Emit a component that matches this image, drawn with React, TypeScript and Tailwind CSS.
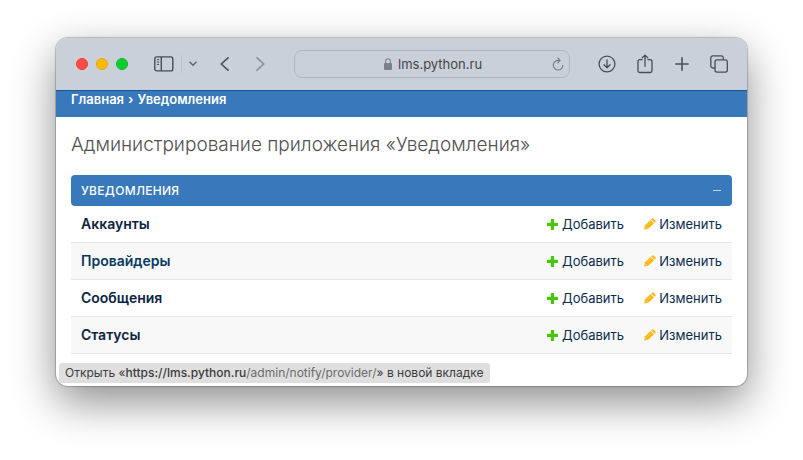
import React from "react";

const models = [
  { name: "Аккаунты", slug: "account" },
  { name: "Провайдеры", slug: "provider", hovered: true },
  { name: "Сообщения", slug: "message" },
  { name: "Статусы", slug: "status" },
];

function SidebarIcon() {
  return (
    <svg width="20" height="16" viewBox="0 0 20 16" fill="none" stroke="currentColor" strokeWidth="1.4" aria-hidden="true">
      <rect x="0.8" y="0.9" width="18" height="14" rx="2" />
      <path d="M7.3 1v14" />
      <path d="M2.9 3.6h2.3M2.9 6h2.3M2.9 8.4h2.3" strokeWidth="1" />
    </svg>
  );
}

function Chevron({ d, w, h, stroke }: { d: string; w: number; h: number; stroke: number }) {
  return (
    <svg width={w} height={h} viewBox={`0 0 ${w} ${h}`} fill="none" stroke="currentColor" strokeWidth={stroke} strokeLinecap="round" strokeLinejoin="round" aria-hidden="true">
      <path d={d} />
    </svg>
  );
}

function LockIcon() {
  return (
    <svg width="8" height="12" viewBox="0 0 8 12" aria-hidden="true" className="text-[#7c8188]">
      <rect x="0" y="5" width="8" height="7" rx="1" fill="currentColor" />
      <path d="M1.6 5.5V3.2a2.4 2.4 0 0 1 4.8 0v2.3" fill="none" stroke="currentColor" strokeWidth="1.1" />
    </svg>
  );
}

function ReloadIcon() {
  return (
    <svg width="12" height="14" viewBox="0 0 12 14" fill="none" stroke="currentColor" strokeWidth="1.1" strokeLinecap="round" strokeLinejoin="round" aria-hidden="true">
      <path d="M7.8 3.4H6A4.8 4.8 0 1 0 10.9 8.2" />
      <path d="M5.8 1l2.3 2.4-2.3 2.4" />
    </svg>
  );
}

function DownloadIcon() {
  return (
    <svg width="18" height="18" viewBox="0 0 18 18" fill="none" stroke="currentColor" strokeWidth="1.3" strokeLinecap="round" strokeLinejoin="round" aria-hidden="true">
      <circle cx="9" cy="9" r="7.9" />
      <path d="M9 4.9v7.6M6 9.7l3 3 3-3" />
    </svg>
  );
}

function ShareIcon() {
  return (
    <svg width="16" height="20" viewBox="0 0 16 20" fill="none" stroke="currentColor" strokeWidth="1.3" strokeLinecap="round" strokeLinejoin="round" aria-hidden="true">
      <path d="M5 5.7H2.7A1.7 1.7 0 0 0 1 7.4v9.4a1.7 1.7 0 0 0 1.7 1.7h10.6a1.7 1.7 0 0 0 1.7-1.7V7.4a1.7 1.7 0 0 0-1.7-1.7H11" />
      <path d="M8 12.3V1.2M5.2 3.9L8 1.1l2.8 2.8" />
    </svg>
  );
}

function PlusIcon() {
  return (
    <svg width="14" height="14" viewBox="0 0 14 14" fill="none" stroke="currentColor" strokeWidth="1.5" strokeLinecap="round" aria-hidden="true">
      <path d="M7 0.8v12.4M0.8 7h12.4" />
    </svg>
  );
}

function TabsIcon() {
  return (
    <svg width="18" height="18" viewBox="0 0 18 18" fill="none" stroke="currentColor" strokeWidth="1.3" strokeLinejoin="round" aria-hidden="true">
      <rect x="5" y="4.8" width="12.3" height="12.3" rx="2" />
      <path d="M5 13H2.8a2 2 0 0 1-2-2V2.8a2 2 0 0 1 2-2h8.4a2 2 0 0 1 2 2v2" />
    </svg>
  );
}

function AddIcon() {
  return (
    <svg width="11" height="11" viewBox="0 0 11 11" fill="#4bc40c" aria-hidden="true">
      <path d="M4.5 0h2q.6 0 .6.6V3.8h3.2q.7 0 .7.7v1.9q0 .7-.7.7H7.1v3.2q0 .7-.6.7h-2q-.7 0-.7-.7V7.1H.7q-.7 0-.7-.7V4.5q0-.7.7-.7h3.1V.6q0-.6.7-.6z" />
    </svg>
  );
}

function EditIcon() {
  return (
    <svg width="12" height="12" viewBox="0 0 12 12" fill="#f8b818" aria-hidden="true">
      <path d="M0.8 7.6L6.5 2.1l3.4 3.4-5.7 5.3-3.3.8q-.7 0-.6-.7z" />
      <path d="M7.2 1.5l.9-.9q.7-.6 1.4 0l1.9 1.9q.6.7 0 1.4l-1 .9z" />
      <path d="M1.1 8.7l2.1 2" stroke="#fff" strokeWidth="0.6" fill="none" opacity="0.6" />
      <path d="M3 7.8l3.8-3.7" stroke="#fff" strokeWidth="0.5" fill="none" opacity="0.5" />
    </svg>
  );
}

function Toolbar() {
  return (
    <header className="flex h-[53px] items-center border-b border-[#1c5691] bg-[#c9d0d9] text-[#464d56]">
      <div className="flex w-[238px] shrink-0 items-center pl-5">
        <div className="flex gap-2">
          <button aria-label="Закрыть" className="size-3 rounded-full border border-[#e8403a] bg-[#ff4b45]" />
          <button aria-label="Свернуть" className="size-3 rounded-full border border-[#e8a708] bg-[#ffb905]" />
          <button aria-label="Развернуть" className="size-3 rounded-full border border-[#0fb92c] bg-[#08ce2e]" />
        </div>
        <button aria-label="Боковая панель" className="ml-[26px]"><SidebarIcon /></button>
        <span className="ml-[7px] h-[18px] w-px bg-[#b9c0ca]" />
        <button aria-label="Группы вкладок" className="ml-[7px] text-[#5f6670]">
          <Chevron w={8} h={6} stroke={1.5} d="M1 1.3l3 3 3-3" />
        </button>
        <button aria-label="Назад" className="ml-[23px]">
          <Chevron w={9} h={14} stroke={1.6} d="M8 0.8L1.2 7 8 13.2" />
        </button>
        <button aria-label="Вперёд" className="ml-[27px] text-[#878e97]">
          <Chevron w={9} h={14} stroke={1.6} d="M1 0.8L7.8 7 1 13.2" />
        </button>
      </div>
      <div className="flex h-7 min-w-0 flex-1 items-center rounded-lg border border-[#b1b7c0] px-[5px]">
        <label className="flex flex-1 items-center justify-center gap-[6px] pl-4">
          <LockIcon />
          <input
            aria-label="Адрес сайта"
            defaultValue="lms.python.ru"
            className="w-[86px] bg-transparent font-[Inter,sans-serif] text-[13px] leading-5 text-[#464646] outline-none"
          />
        </label>
        <button aria-label="Перезагрузить" className="text-[#757b83]"><ReloadIcon /></button>
      </div>
      <div className="flex w-[177px] shrink-0 items-center justify-between pr-[19px] pl-7">
        <button aria-label="Загрузки"><DownloadIcon /></button>
        <button aria-label="Поделиться"><ShareIcon /></button>
        <button aria-label="Новая вкладка"><PlusIcon /></button>
        <button aria-label="Обзор вкладок"><TabsIcon /></button>
      </div>
    </header>
  );
}

export default function App() {
  return (
    <div className="min-h-screen bg-white px-14 pt-[38px] pb-[74px] font-[Inter,sans-serif]">
      <div className="relative overflow-hidden rounded-xl bg-white shadow-[0_0_1px_1px_rgba(0,0,0,0.22),0_16px_44px_rgba(0,0,0,0.45)]">
        <Toolbar />
        <nav aria-label="Навигация" className="flex h-[26px] gap-1 bg-[#3779ba] px-[15px] text-[13px] leading-4 font-semibold text-white">
          <a href="#home">Главная</a>
          <span>›</span>
          <span>Уведомления</span>
        </nav>
        <main className="px-[15px] pt-4 pb-8">
          <h1 className="mb-[18px] text-[19px] leading-6 font-light text-[#505050]">
            Администрирование приложения «Уведомления»
          </h1>
          <section>
            <div className="flex h-[31px] items-center justify-between rounded-[4px] bg-[#3779ba] px-[10px] text-white">
              <h2 id="app-caption" className="text-xs font-medium tracking-wide uppercase">
                Уведомления
              </h2>
              <button aria-label="Свернуть раздел" className="flex h-4 w-[10px] items-center justify-center">
                <span className="h-px w-2 bg-[#c3d7ea]" />
              </button>
            </div>
            <table aria-labelledby="app-caption" className="w-full border-separate border-spacing-0">
              <tbody>
                {models.map((m) => (
                  <tr key={m.slug} className="h-[37px] even:bg-[#f8f8f8] *:border-b *:border-[#e6e6e6]">
                    <th scope="row" className="pl-[10px] text-left text-sm font-semibold">
                      <a href={`#${m.slug}`} className={m.hovered ? "text-[#0c3860]" : "text-[#0c2440]"}>
                        {m.name}
                      </a>
                    </th>
                    <td className="w-[86px] text-[13px] leading-5 text-[#0c2c4c]">
                      <a href={`#${m.slug}-add`} className="flex items-center justify-end gap-1">
                        <AddIcon />
                        Добавить
                      </a>
                    </td>
                    <td className="w-[108px] pr-[10px] text-[13px] leading-5 text-[#0c2c4c]">
                      <a href={`#${m.slug}-change`} className="flex items-center justify-end gap-[3px]">
                        <EditIcon />
                        Изменить
                      </a>
                    </td>
                  </tr>
                ))}
              </tbody>
            </table>
          </section>
        </main>
        <div role="status" className="absolute bottom-[3px] left-[3px] h-5 rounded-[3px] bg-[#dfdfdf] px-[6px] text-xs leading-5 whitespace-nowrap text-[#3c3c3c]">
          Открыть «<span className="font-medium">https://lms.python.ru</span>
          <span className="text-[#6b6b6b]">/admin/notify/provider/</span>» в новой вкладке
        </div>
      </div>
    </div>
  );
}
